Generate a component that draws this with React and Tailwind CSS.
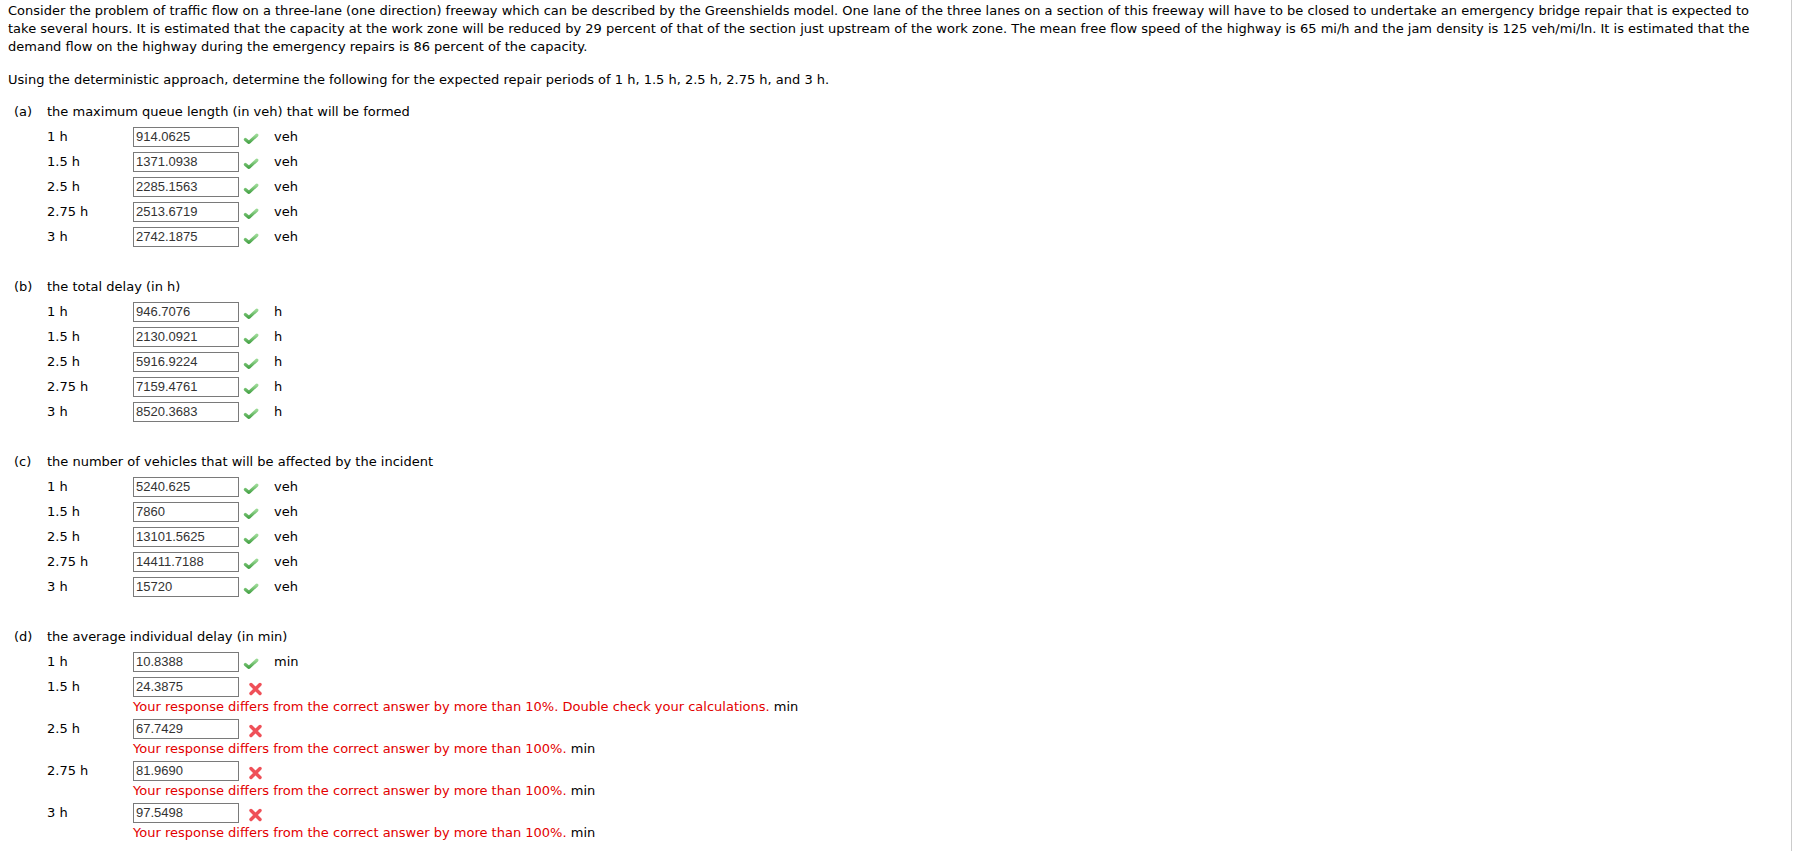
import React from "react";

const parts = [
  {
    key: "a",
    title: "the maximum queue length (in veh) that will be formed",
    unit: "veh",
    rows: [
      ["1 h", "914.0625"],
      ["1.5 h", "1371.0938"],
      ["2.5 h", "2285.1563"],
      ["2.75 h", "2513.6719"],
      ["3 h", "2742.1875"],
    ],
  },
  {
    key: "b",
    title: "the total delay (in h)",
    unit: "h",
    rows: [
      ["1 h", "946.7076"],
      ["1.5 h", "2130.0921"],
      ["2.5 h", "5916.9224"],
      ["2.75 h", "7159.4761"],
      ["3 h", "8520.3683"],
    ],
  },
  {
    key: "c",
    title: "the number of vehicles that will be affected by the incident",
    unit: "veh",
    rows: [
      ["1 h", "5240.625"],
      ["1.5 h", "7860"],
      ["2.5 h", "13101.5625"],
      ["2.75 h", "14411.7188"],
      ["3 h", "15720"],
    ],
  },
  {
    key: "d",
    title: "the average individual delay (in min)",
    unit: "min",
    rows: [
      ["1 h", "10.8388"],
      ["1.5 h", "24.3875", "Your response differs from the correct answer by more than 10%. Double check your calculations."],
      ["2.5 h", "67.7429", "Your response differs from the correct answer by more than 100%."],
      ["2.75 h", "81.9690", "Your response differs from the correct answer by more than 100%."],
      ["3 h", "97.5498", "Your response differs from the correct answer by more than 100%."],
    ],
  },
];

// green tick shown after a correct answer
function Check() {
  return (
    <svg width="16" height="12" viewBox="0 0 16 12" className="mt-[4px]">
      <defs>
        <linearGradient id="ck" x1="0" y1="0" x2="0" y2="1">
          <stop offset="0" stopColor="#9ad994" />
          <stop offset="1" stopColor="#4ba64b" />
        </linearGradient>
      </defs>
      <path d="M2.4 6.4 L6 9.4 L13.8 2.2" fill="none" stroke="url(#ck)" strokeWidth="3.2" strokeLinecap="round" strokeLinejoin="round" />
    </svg>
  );
}

// red cross shown after a wrong answer
function Cross() {
  return (
    <svg width="15" height="14" viewBox="0 0 15 14" className="mt-[4px] ml-[5px]">
      <path d="M3 2.5 L12 11.5 M12 2.5 L3 11.5" fill="none" stroke="#ef5058" strokeWidth="3.4" strokeLinecap="round" />
    </svg>
  );
}

function Row({ label, value, error, unit }) {
  return (
    <div>
      <div className="flex items-center h-[25px] pl-[39px]">
        <div className="w-[86px]">{label}</div>
        <div className="w-[106px] h-[20px] border border-[#7a7a7a] px-[2px] font-['Liberation_Sans',Arial,sans-serif] text-[13px] leading-[18px] text-[#333]">
          {value}
        </div>
        <div className="w-[35px] flex pl-[4px]">{error ? <Cross /> : <Check />}</div>
        {!error && <div>{unit}</div>}
      </div>
      {error && (
        <div className="pl-[125px] -mt-[2px] h-[19px] leading-[19px]">
          <span className="text-[#e30000]">{error}</span> {unit}
        </div>
      )}
    </div>
  );
}

export default function App() {
  return (
    <div className="w-[1792px] min-h-[851px] border-r border-[#cccccc] bg-white pl-2 pr-3 pt-[2px] font-['DejaVu_Sans',Verdana,sans-serif] text-[13px] leading-[18px] text-black">
      <p>
        Consider the problem of traffic flow on a three-lane (one direction) freeway which can be described by the Greenshields model. One lane of the three lanes on a section of this freeway will have to be closed to undertake an emergency bridge repair that is expected to take several hours. It is estimated that the capacity at the work zone will be reduced by 29 percent of that of the section just upstream of the work zone. The mean free flow speed of the highway is 65 mi/h and the jam density is 125 veh/mi/ln. It is estimated that the demand flow on the highway during the emergency repairs is 86 percent of the capacity.
      </p>
      <p className="mt-[15px]">
        Using the deterministic approach, determine the following for the expected repair periods of 1 h, 1.5 h, 2.5 h, 2.75 h, and 3 h.
      </p>
      <div className="mt-[10px] flex flex-col gap-[25px]">
        {parts.map((p) => (
          <div key={p.key}>
            <div className="flex items-center h-[25px] pl-[6px]">
              <div className="w-[33px]">({p.key})</div>
              <div>{p.title}</div>
            </div>
            {p.rows.map(([label, value, error]) => (
              <Row key={label} label={label} value={value} error={error} unit={p.unit} />
            ))}
          </div>
        ))}
      </div>
    </div>
  );
}
